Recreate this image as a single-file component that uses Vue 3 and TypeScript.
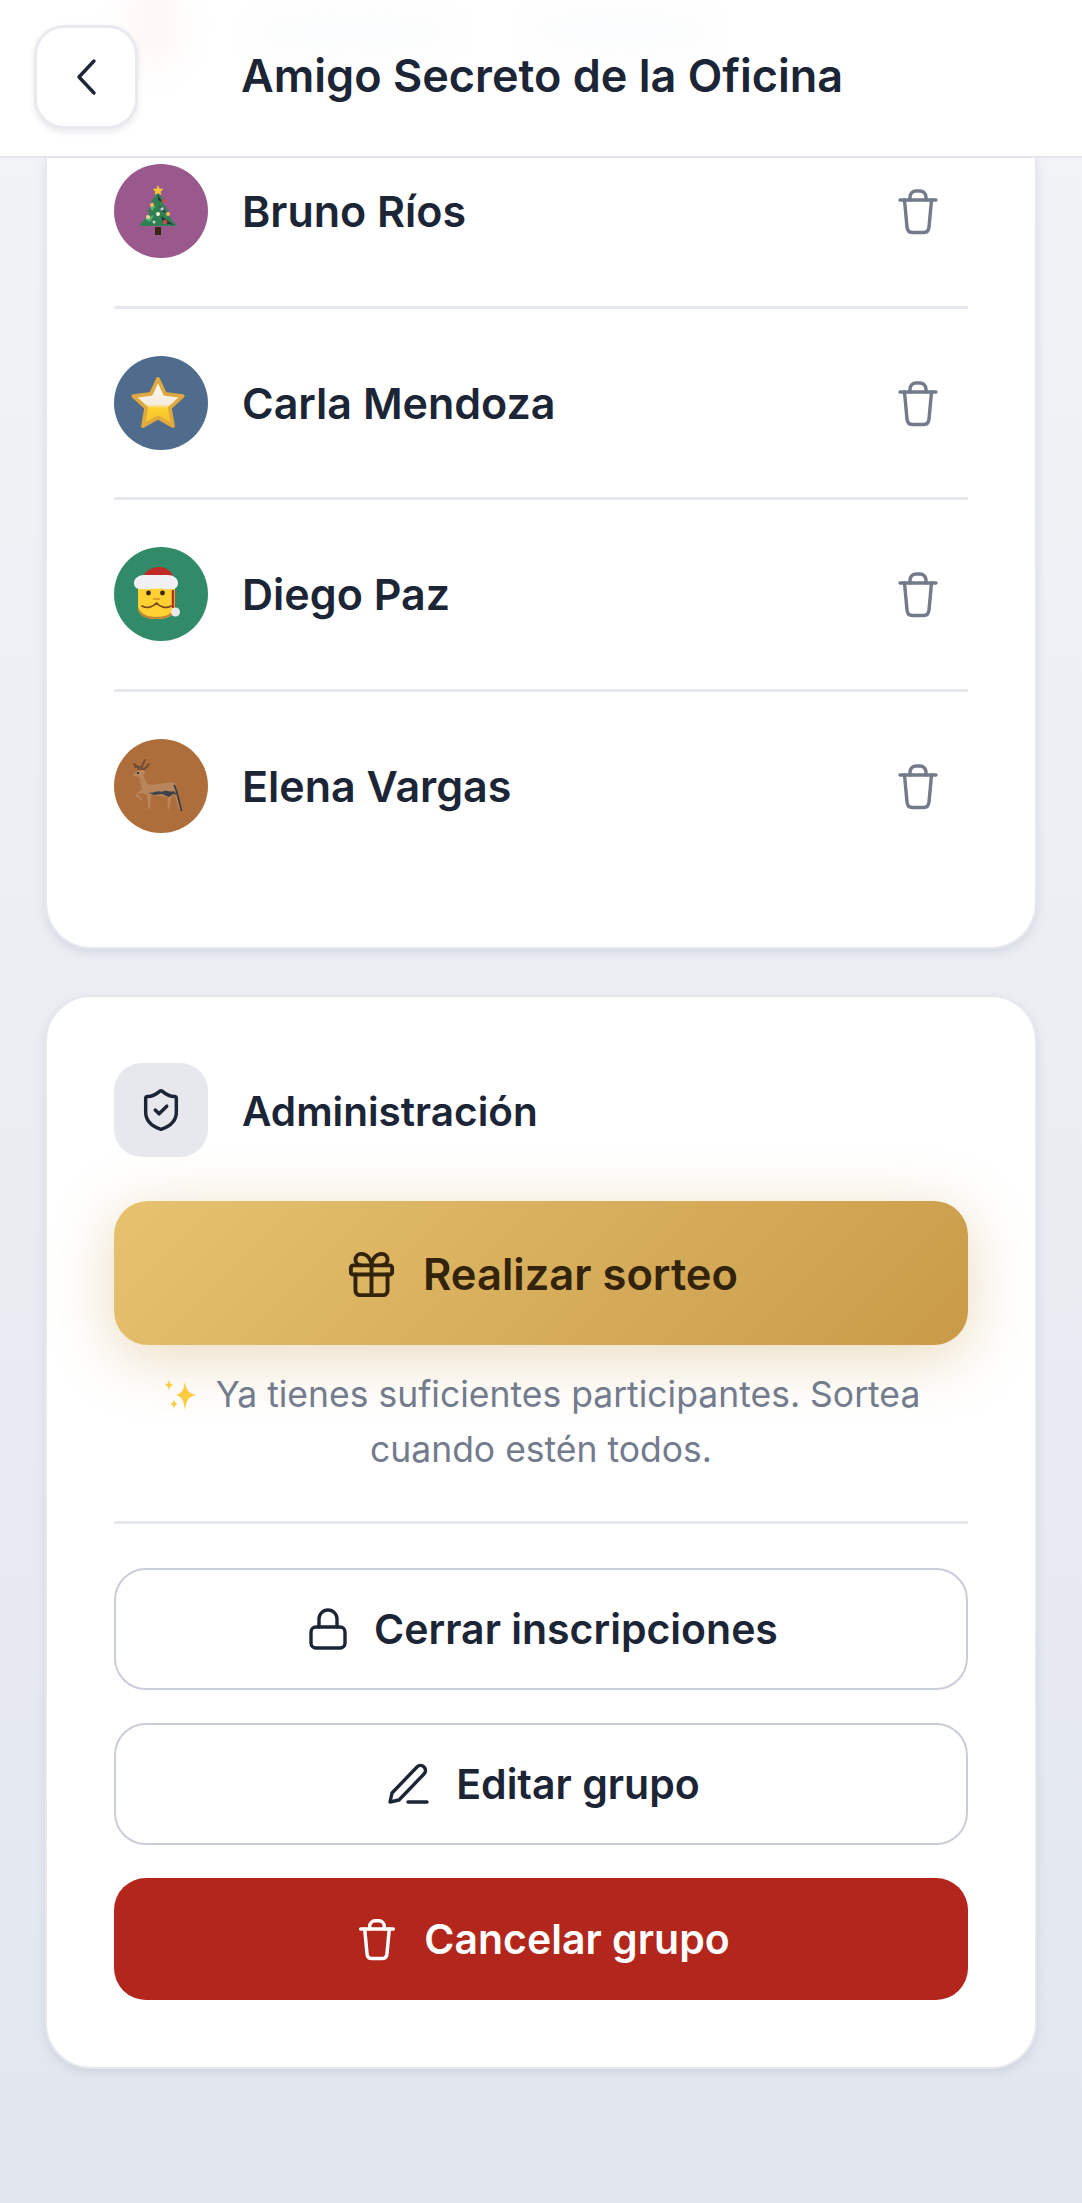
<template>
  <div class="page">
    <header class="topbar">
      <span class="blob blob-red"></span>
      <span class="blob blob-grey-a"></span>
      <span class="blob blob-grey-b"></span>
      <button class="back-btn" aria-label="Volver">
        <svg width="24" height="38" viewBox="0 0 24 38" fill="none">
          <path d="M20 3 5 19l15 16" stroke="#1c2536" stroke-width="3.400" stroke-linecap="round" stroke-linejoin="round" />
        </svg>
      </button>
      <h1 class="title">Amigo Secreto de la Oficina</h1>
    </header>

    <main class="content">
      <section class="card members">
        <div v-for="p in participants" :key="p.name" class="member">
          <div class="avatar" :style="{ background: p.color }">
            <svg v-if="p.emoji === 'tree'" width="44" height="52" viewBox="0 0 44 52">
              <rect x="19" y="42" width="6" height="8" fill="#3a2413" />
              <path d="M22 7 29 17 26 17 33 27 29.500 27 41 41 3 41 14.500 27 11 27 18 17 15 17Z" fill="#2f8052" />
              <path d="M22 10 26 17 22 15ZM23 20 31 28 25 26ZM25 31 38 40 27 38Z" fill="#28343a" />
              <path d="M14 22 20 21 16 26ZM9 34 18 30 14 37Z" fill="#58b37a" />
              <path d="M22 0 23.600 3.600 27.500 4 24.600 6.500 25.400 10 22 8.200 18.600 10 19.400 6.500 16.500 4 20.400 3.600Z" fill="#f4c53a" />
              <circle cx="16" cy="20" r="2" fill="#f3c34c" />
              <circle cx="28" cy="16" r="2" fill="#c0504a" />
              <circle cx="26" cy="24" r="1.700" fill="#c6cbdc" />
              <circle cx="22" cy="29" r="2" fill="#f5efd8" />
              <circle cx="32" cy="29" r="2" fill="#f2c14a" />
              <circle cx="12" cy="32" r="2" fill="#f0d490" />
              <circle cx="29" cy="37" r="2.200" fill="#c4534a" />
              <circle cx="18" cy="37" r="1.500" fill="#c6cbdc" />
            </svg>
            <svg v-else-if="p.emoji === 'star'" width="58" height="56" viewBox="0 0 54 52">
              <defs>
                <linearGradient id="starFill" x1="0" y1="0" x2="0" y2="1">
                  <stop offset="0" stop-color="#fdfcf8" />
                  <stop offset="0.54" stop-color="#f4ecdc" />
                  <stop offset="0.62" stop-color="#fdd12f" />
                  <stop offset="1" stop-color="#f6bd2c" />
                </linearGradient>
              </defs>
              <path d="M27 3.500 33.500 17.500 50 19.500 38 30.500 41 47.500 27 39.500 13 47.500 16 30.500 4 19.500 20.500 17.500Z" fill="url(#starFill)" stroke="#dfa93f" stroke-width="3.500" stroke-linejoin="round" />
            </svg>
            <svg v-else-if="p.emoji === 'santa'" width="48" height="54" viewBox="0 0 48 54">
              <path d="M4 20h37v20c0 8-6 12-18.500 12S4 48 4 40Z" fill="#ffd133" />
              <path d="M4 40c0 8 6 12 18.500 12S41 48 41 40c-2 6-8 10-18.500 10S6 46 4 40Z" fill="#c58236" />
              <path d="M8 39c5 3 11 1 14.500-3 3.500 4 9.500 6 14.500 3" fill="none" stroke="#7a4a20" stroke-width="1.800" stroke-linecap="round" />
              <path d="M8 12C10 4 18 0 25 0c7 0 13 4 15 12Z" fill="#c12a24" />
              <path d="M0 16c0-5 5-8 10-8h24c5 0 10 3 10 8 0 5-4 7-8 6-4 1-8-1-13 0-5-1-9 1-13 0-4 1-10 0-10-6Z" fill="#f1f1f3" />
              <path d="M39 23v18" stroke="#c12a24" stroke-width="2.500" />
              <circle cx="41.500" cy="45" r="4.500" fill="#e9e9ec" />
              <circle cx="14.500" cy="26" r="2.400" fill="#3a2413" />
              <circle cx="28.500" cy="26" r="2.400" fill="#3a2413" />
              <path d="M20 32h5" stroke="#df9c2a" stroke-width="2.200" stroke-linecap="round" />
            </svg>
            <svg v-else-if="p.emoji === 'deer'" width="52" height="54" viewBox="0 0 52 54">
              <path d="M8 12C6 8 4 6 2 5M9 11c1-4 2-7 4-10M10 11c3-1 5-3 7-6M8 8C6 7 4 8 3 8" fill="none" stroke="#6d4a33" stroke-width="1.800" stroke-linecap="round" />
              <path d="M1 15 7 11h5l1 3-2 2 4 9c7 2 17-1 26-2 3 1 4 5 4 11l4 18h-1.500L43 37l-3-1-3 14h-1.500l.500-12-8-1-9-1-1 14h-1.500L15 36l-4-2-6 1 6 6-1 1-7-6 7-6-3-12-5-1Z" fill="#b9865c" />
              <path d="M14 33c6 3 12-3 16 0 4-3 8 1 12-1l3 4-4-1-4 3-7-3-8 1Z" fill="#3d4149" />
              <path d="M42 26c2 3 3 8 3.500 10l4 16" fill="none" stroke="#33373f" stroke-width="1.600" />
              <circle cx="6" cy="14" r="1" fill="#1d1a18" />
            </svg>
          </div>
          <span class="member-name">{{ p.name }}</span>
          <button class="remove-btn" :aria-label="'Quitar ' + p.name">
            <svg width="44" height="48" viewBox="0 0 44 48" fill="none" stroke="#737b8b" stroke-width="3.400" stroke-linecap="round" stroke-linejoin="round">
              <path d="M4 13h36" />
              <path d="M14 13v-3a6 6 0 0 1 6-6h4a6 6 0 0 1 6 6v3" />
              <path d="M8.500 13l2.500 27c.3 3.500 2 5.500 5.500 5.500h11c3.500 0 5.200-2 5.500-5.500l2.500-27" />
            </svg>
          </button>
          <div class="member-line"></div>
        </div>
      </section>

      <section class="card admin">
        <div class="admin-head">
          <div class="admin-icon">
            <svg width="46" height="46" viewBox="0 0 24 24" fill="none" stroke="#1c2536" stroke-width="1.800" stroke-linecap="round" stroke-linejoin="round">
              <path d="M20 13c0 5-3.500 7.500-7.660 8.950a1 1 0 0 1-.67-.01C7.500 20.500 4 18 4 13V6a1 1 0 0 1 1-1c2 0 4.500-1.200 6.240-2.720a1.170 1.170 0 0 1 1.520 0C14.510 3.810 17 5 19 5a1 1 0 0 1 1 1z" />
              <path d="m9 12 2 2 4-4" />
            </svg>
          </div>
          <h2 class="admin-title">Administración</h2>
        </div>

        <button class="btn btn-gold">
          <svg width="55" height="55" viewBox="0 0 24 24" fill="none" stroke="#33230b" stroke-width="1.700" stroke-linecap="round" stroke-linejoin="round">
            <rect x="3" y="8" width="18" height="4" rx="1" />
            <path d="M12 8v13" />
            <path d="M19 12v7a2 2 0 0 1-2 2H7a2 2 0 0 1-2-2v-7" />
            <path d="M7.500 8a2.500 2.500 0 0 1 0-5C10.500 3 12 6 12 8c0-2 1.500-5 4.500-5a2.500 2.500 0 0 1 0 5" />
          </svg>
          Realizar sorteo
        </button>

        <p class="hint">
          <svg class="sparkles" width="36" height="36" viewBox="0 0 36 36">
            <path d="M23 4c1 9 3 12 11 14-8 2-10 5-11 16-1-11-3-14-9-16 6-2 8-5 9-14Z" fill="#fdcb3f" />
            <path d="M7 2c.500 4 1.500 5 4 6-2.500 1-3.500 2-4 6-.500-4-1.500-5-4-6 2.500-1 3.500-2 4-6Z" fill="#fdcb3f" />
            <path d="M12 22c.400 3 1.200 4 3.500 5-2.300 1-3.100 2-3.500 6-.400-4-1.200-5-3.500-6 2.300-1 3.100-2 3.500-5Z" fill="#fdcb3f" />
          </svg>
          Ya tienes suficientes participantes. Sortea cuando estén todos.
        </p>

        <div class="admin-line"></div>

        <div class="actions">
          <button class="btn btn-outline">
            <svg width="38" height="42" viewBox="0 0 38 42" fill="none" stroke="#1c2536" stroke-width="3.400" stroke-linecap="round" stroke-linejoin="round">
              <rect x="2" y="19" width="34" height="21" rx="5" />
              <path d="M10 19v-8c0-5 4-9 9-9s9 4 9 9v8" />
            </svg>
            Cerrar inscripciones
          </button>
          <button class="btn btn-outline">
            <svg width="42" height="42" viewBox="0 0 42 42" fill="none" stroke="#1c2536" stroke-width="3.400" stroke-linecap="round" stroke-linejoin="round">
              <path d="M3 39l2-9L30 4c2-2 5-2 7 0s2 5 0 7L12 37Z" />
              <path d="M21 39h19" />
            </svg>
            Editar grupo
          </button>
          <button class="btn btn-danger">
            <svg width="40" height="44" viewBox="0 0 44 48" fill="none" stroke="#fff" stroke-width="3.800" stroke-linecap="round" stroke-linejoin="round">
              <path d="M4 13h36" />
              <path d="M14 13v-3a6 6 0 0 1 6-6h4a6 6 0 0 1 6 6v3" />
              <path d="M8.500 13l2.500 27c.3 3.500 2 5.500 5.500 5.500h11c3.500 0 5.200-2 5.500-5.500l2.500-27" />
            </svg>
            Cancelar grupo
          </button>
        </div>
      </section>
    </main>
  </div>
</template>

<script setup lang="ts">
interface Participant {
  name: string
  color: string
  emoji: 'tree' | 'star' | 'santa' | 'deer'
}

const participants: Participant[] = [
  { name: 'Bruno Ríos', color: '#9a598c', emoji: 'tree' },
  { name: 'Carla Mendoza', color: '#4f6c8c', emoji: 'star' },
  { name: 'Diego Paz', color: '#328b68', emoji: 'santa' },
  { name: 'Elena Vargas', color: '#ad6e3c', emoji: 'deer' }
]
</script>

<style scoped>
.page {
  height: 2203px;
  overflow: hidden;
  display: flex;
  flex-direction: column;
  font-family: Inter, "Noto Sans", sans-serif;
  color: #1c2536;
  background: linear-gradient(180deg, #f3f4f7 0%, #e2e6ee 100%);
}

.topbar {
  position: relative;
  flex: none;
  height: 158px;
  box-sizing: border-box;
  display: flex;
  align-items: center;
  padding: 0 34px 2px;
  background: #fff;
  border-bottom: 2px solid #e4e6ec;
  overflow: hidden;
}

.blob {
  position: absolute;
  border-radius: 50%;
  filter: blur(14px);
}

.blob-red {
  left: 125px;
  top: -20px;
  width: 60px;
  height: 90px;
  background: rgba(240, 160, 140, 0.08);
}

.blob-grey-a {
  left: 245px;
  top: 10px;
  width: 215px;
  height: 46px;
  background: rgba(230, 233, 240, 0.14);
}

.blob-grey-b {
  left: 526px;
  top: 6px;
  width: 190px;
  height: 50px;
  background: rgba(230, 233, 240, 0.14);
}

.back-btn {
  position: relative;
  width: 104px;
  height: 104px;
  flex: none;
  display: flex;
  align-items: center;
  justify-content: center;
  padding: 0;
  background: #fff;
  border: 3px solid #e8eaef;
  border-radius: 30px;
  box-shadow: 0 3px 6px rgba(28, 37, 54, 0.1);
}

.title {
  position: relative;
  margin: -3px 0 0 103px;
  font-size: 45px;
  font-weight: 600;
  white-space: nowrap;
}

.content {
  flex: 1;
  display: flex;
  flex-direction: column;
  gap: 46px;
  padding: 0 45px;
}

.card {
  box-sizing: border-box;
  background: #fff;
  border: 2px solid #e6e8ee;
  border-radius: 46px;
  box-shadow: 0 4px 8px rgba(160, 168, 190, 0.3);
}

.members {
  border-top: none;
  border-top-left-radius: 0;
  border-top-right-radius: 0;
  height: 791px;
  padding: 6px 67px 0;
}

.member {
  position: relative;
  height: 191.500px;
  padding-bottom: 97.500px;
  box-sizing: border-box;
  display: flex;
  align-items: center;
}

.member-line {
  position: absolute;
  left: 0;
  right: 0;
  top: 141.500px;
  height: 3px;
  background: #e5e8ed;
}

.member:last-child .member-line {
  display: none;
}

.avatar {
  flex: none;
  width: 94px;
  height: 94px;
  box-sizing: border-box;
  padding-right: 6px;
  border-radius: 50%;
  display: flex;
  align-items: center;
  justify-content: center;
}

.member-name {
  flex: 1;
  margin-left: 34px;
  font-size: 43px;
  font-weight: 600;
}

.remove-btn {
  flex: none;
  width: 100px;
  height: 94px;
  padding: 0;
  display: flex;
  align-items: center;
  justify-content: center;
  background: none;
  border: none;
}

.admin {
  height: 1074px;
  padding: 66px 67px 0;
}

.admin-head {
  display: flex;
  align-items: center;
  gap: 34px;
}

.admin-icon {
  width: 94px;
  height: 94px;
  flex: none;
  display: flex;
  align-items: center;
  justify-content: center;
  background: #e6e8ee;
  border-radius: 28px;
}

.admin-title {
  margin: 3px 0 0;
  font-size: 40.500px;
  font-weight: 600;
}

.btn {
  width: 100%;
  box-sizing: border-box;
  display: flex;
  align-items: center;
  justify-content: center;
  gap: 27px;
  padding: 0 0 0 5px;
  font-family: inherit;
  font-weight: 600;
  font-size: 41px;
}

.btn-gold {
  height: 144px;
  margin-top: 44px;
  gap: 24px;
  padding: 2px 0 0;
  font-size: 43.500px;
  color: #33230b;
  border: none;
  border-radius: 34px;
  background: linear-gradient(135deg, #e6c26f 0%, #c99b49 100%);
  box-shadow: 0 12px 60px rgba(201, 155, 73, 0.38);
}

.hint {
  margin: 22px 20px 0;
  font-size: 35.500px;
  line-height: 55px;
  text-align: center;
  color: #737b8d;
}

.sparkles {
  vertical-align: -6px;
  margin-right: 8px;
}

.admin-line {
  height: 3px;
  margin-top: 44px;
  background: #e5e8ed;
}

.actions {
  display: flex;
  flex-direction: column;
  gap: 33px;
  margin-top: 44px;
}

.btn-outline {
  height: 122px;
  color: #1c2536;
  background: #fff;
  border: 2.500px solid #cacdda;
  border-radius: 32px;
}

.btn-danger {
  height: 122px;
  color: #fff;
  border: none;
  border-radius: 32px;
  background: #b2261c;
}
</style>

<style>
html,
body {
  margin: 0;
  background: #e2e6ee;
}
</style>
